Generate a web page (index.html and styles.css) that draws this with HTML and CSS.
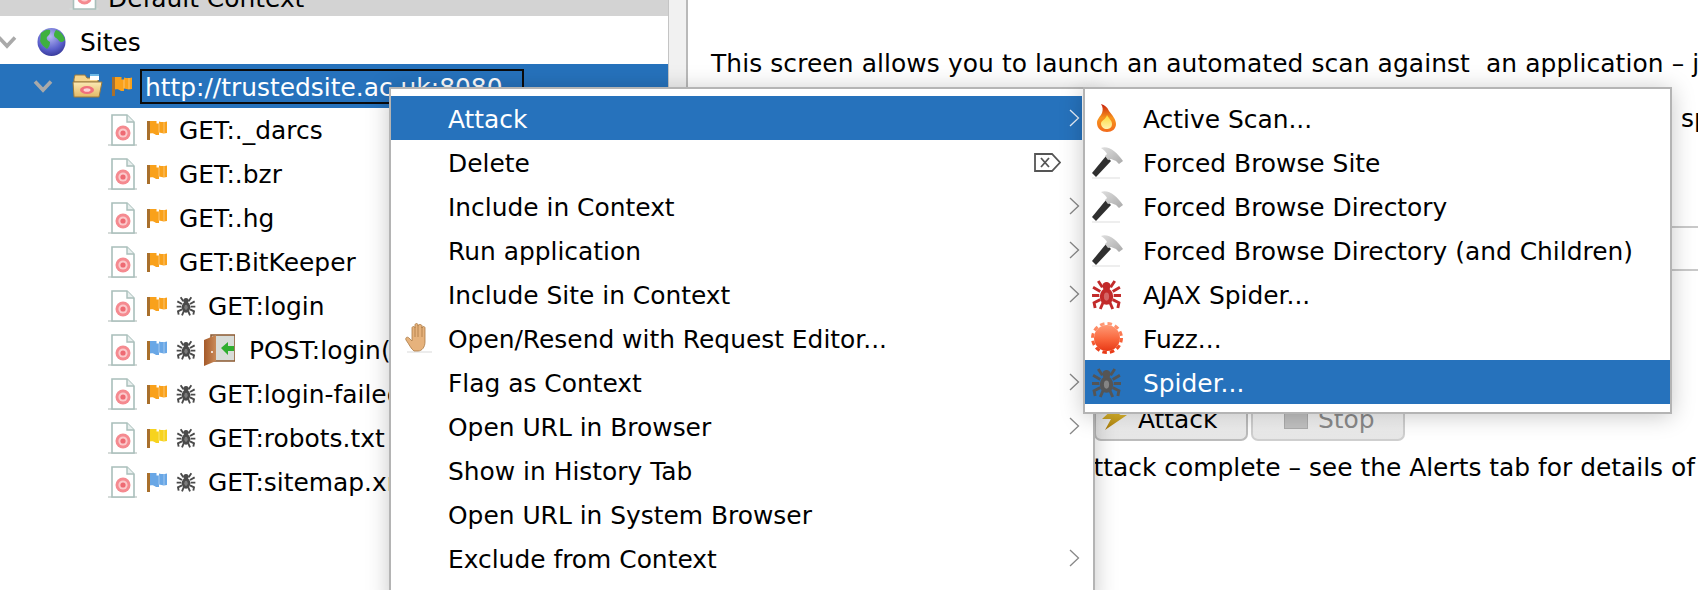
FILE: index.html
```html
<!DOCTYPE html>
<html lang="en">
<head>
<meta charset="utf-8">
<title>OWASP ZAP</title>
<link rel="stylesheet" href="styles.css">
</head>
<body>
<svg class="sprite" aria-hidden="true">
  <defs>
    <linearGradient id="flameG" x1="0" y1="0" x2="0" y2="1"><stop offset="0" stop-color="#c8200c"/><stop offset=".5" stop-color="#f7941e"/><stop offset="1" stop-color="#f26a1b"/></linearGradient>
    <linearGradient id="flameI" x1="0" y1="0" x2="0" y2="1"><stop offset="0" stop-color="#fdd835"/><stop offset="1" stop-color="#fff3b0"/></linearGradient>
    <linearGradient id="burstG" x1="0" y1="0" x2="0" y2="1"><stop offset="0" stop-color="#ff9a76"/><stop offset=".55" stop-color="#f9663c"/><stop offset="1" stop-color="#e83a17"/></linearGradient>
    <linearGradient id="boltG" x1="0" y1="0" x2="0" y2="1"><stop offset="0" stop-color="#f7d33e"/><stop offset="1" stop-color="#a97a08"/></linearGradient>
    <linearGradient id="folderG" x1="0" y1="0" x2="0" y2="1"><stop offset="0" stop-color="#fbe9b4"/><stop offset="1" stop-color="#e3b965"/></linearGradient>
    <linearGradient id="doorG" x1="0" y1="0" x2="1" y2="0"><stop offset="0" stop-color="#a55a2a"/><stop offset="1" stop-color="#c98a58"/></linearGradient>
    <radialGradient id="globeG" cx=".45" cy=".3" r=".8"><stop offset="0" stop-color="#b6b8f2"/><stop offset=".6" stop-color="#5a5fcb"/><stop offset="1" stop-color="#2b2c88"/></radialGradient>
    <linearGradient id="hammerG" x1="0" y1="0" x2="1" y2="1"><stop offset="0" stop-color="#dedede"/><stop offset="1" stop-color="#aaa"/></linearGradient>

    <symbol id="i-doc" viewBox="0 0 29 32">
      <path d="M0 30h29v2H0z" fill="#d5dbd9"/>
      <path d="M4 1h15l7 7v23H4z" fill="#fff" stroke="#a9bfbb" stroke-width="1.6"/>
      <path d="M19 1v7h7" fill="#e8efee" stroke="#a9bfbb" stroke-width="1.4"/>
      <circle cx="15" cy="19" r="7.5" fill="#f58a90"/>
      <circle cx="15" cy="19" r="4.6" fill="#fbc9cb"/>
      <circle cx="15" cy="19" r="2.6" fill="#ee6a73"/>
    </symbol>
    <symbol id="i-flag" viewBox="0 0 20 20">
      <path d="M0 1h3v19H0z" fill="#a9702c"/>
      <path d="M3 1h6.500v2.500H12V1.500c3 .8 5 .6 8 0V13c-3 .7-5 .5-8-.4V15H9c-2-1.800-4-2-6-1.500z" fill="currentColor"/>
      <path d="M12 3.500v9M17 2v11" stroke="#fff" stroke-opacity=".25" stroke-width="1.500"/>
    </symbol>
    <symbol id="i-spider" viewBox="0 0 30 30">
      <g fill="none" stroke="currentColor" stroke-width="2.800">
        <path d="M11 8 7 2M19 8l4-6M9 12 2 8M21 12l7-4M8 16H1M22 16h7M9 20l-6 3 1 5M21 20l6 3-1 5M12 22l-3 7M18 22l3 7"/>
      </g>
      <ellipse cx="15" cy="17" rx="6.500" ry="8" fill="currentColor"/>
      <circle cx="15" cy="7" r="4" fill="currentColor"/>
      <ellipse cx="15" cy="17" rx="2.500" ry="4" fill="#fff" opacity=".28"/>
    </symbol>
    <symbol id="i-chev" viewBox="0 0 20 14">
      <path d="M2 2.500 10 11l8-8.500" fill="none" stroke="#a9a9a9" stroke-width="3.600"/>
    </symbol>
    <symbol id="i-arrow" viewBox="0 0 11 18">
      <path d="M1 1l8.500 8L1 17" fill="none" stroke="currentColor" stroke-width="1.300"/>
    </symbol>
    <symbol id="i-hammer" viewBox="0 0 32 33">
      <path d="M1 31h28v2H1z" fill="#eee"/>
      <path d="M15 10 1 27l4 4 15-16z" fill="#2f2f2f"/>
      <path d="M10 2C17-1 26 6 32 15l-4 3-3-3-5-2-3 1-3-4 2-2c-1-2-3-4-6-6z" fill="url(#hammerG)"/>
    </symbol>
  </defs>
</svg>

<div class="app">
  <section class="tree">
    <div class="row row-context">
      <svg class="ic-doc-ctx"><use href="#i-doc"/></svg>
      <span class="label-ctx">Default Context</span>
    </div>
    <div class="row row-sites">
      <svg class="chev"><use href="#i-chev"/></svg>
      <svg class="globe" viewBox="0 0 29 28">
        <circle cx="14.500" cy="14" r="14" fill="url(#globeG)"/>
        <path d="M4 5c4-3 6-4 9-3 1 3-1 5-3 7-1 2 1 4 3 5 0 3-1 5-3 7-3-2-6-5-7-8 1-2 0-5 1-8zM19 2c4 1 8 5 9 10-2 2-4 3-6 1-1-3-5-3-5-6 0-2 1-4 2-5z" fill="#3fb13f"/>
      </svg>
      <span class="label">Sites</span>
    </div>
    <div class="row row-site">
      <svg class="chev"><use href="#i-chev"/></svg>
      <svg class="folder" viewBox="0 0 31 25">
        <path d="M2 5l1-4h10l2 3h11v4H2z" fill="#f5d58e" stroke="#9b7a3c"/>
        <path d="M18 0h9v6h-9z" fill="#fff"/><path d="M18 0h9v2h-9z" fill="#6db8e6"/>
        <path d="M1 8h29l-3 15H2z" fill="url(#folderG)" stroke="#9b7a3c"/>
        <ellipse cx="15" cy="16" rx="7" ry="4" fill="#f0707c"/><ellipse cx="15" cy="16" rx="3.500" ry="1.800" fill="#fcd4d6"/>
      </svg>
      <svg class="flag flag-orange"><use href="#i-flag"/></svg>
      <span class="url">http://trustedsite.ac.uk:8080</span>
    </div>
    <div class="row row-leaf">
      <svg class="doc"><use href="#i-doc"/></svg><svg class="flag flag-orange"><use href="#i-flag"/></svg>
      <span class="label">GET:._darcs</span>
    </div>
    <div class="row row-leaf">
      <svg class="doc"><use href="#i-doc"/></svg><svg class="flag flag-orange"><use href="#i-flag"/></svg>
      <span class="label">GET:.bzr</span>
    </div>
    <div class="row row-leaf">
      <svg class="doc"><use href="#i-doc"/></svg><svg class="flag flag-orange"><use href="#i-flag"/></svg>
      <span class="label">GET:.hg</span>
    </div>
    <div class="row row-leaf">
      <svg class="doc"><use href="#i-doc"/></svg><svg class="flag flag-orange"><use href="#i-flag"/></svg>
      <span class="label">GET:BitKeeper</span>
    </div>
    <div class="row row-leaf">
      <svg class="doc"><use href="#i-doc"/></svg><svg class="flag flag-orange"><use href="#i-flag"/></svg><svg class="spider"><use href="#i-spider"/></svg>
      <span class="label">GET:login</span>
    </div>
    <div class="row row-leaf">
      <svg class="doc"><use href="#i-doc"/></svg><svg class="flag flag-blue"><use href="#i-flag"/></svg><svg class="spider"><use href="#i-spider"/></svg>
      <svg class="door" viewBox="0 0 31 32">
        <path d="M7 1h24v26H7z" fill="#d8dcd8" stroke="#8c5a30" stroke-width="1.500"/>
        <path d="M0 6l12-5v26L0 32z" fill="url(#doorG)"/>
        <circle cx="8" cy="18" r="1" fill="#fff"/>
        <path d="M17 14l7-6v4h6v5h-6v4z" fill="#2fae2f"/>
      </svg>
      <span class="label label-post">POST:login()</span>
    </div>
    <div class="row row-leaf">
      <svg class="doc"><use href="#i-doc"/></svg><svg class="flag flag-orange"><use href="#i-flag"/></svg><svg class="spider"><use href="#i-spider"/></svg>
      <span class="label">GET:login-failed</span>
    </div>
    <div class="row row-leaf">
      <svg class="doc"><use href="#i-doc"/></svg><svg class="flag flag-yellow"><use href="#i-flag"/></svg><svg class="spider"><use href="#i-spider"/></svg>
      <span class="label">GET:robots.txt</span>
    </div>
    <div class="row row-leaf">
      <svg class="doc"><use href="#i-doc"/></svg><svg class="flag flag-blue"><use href="#i-flag"/></svg><svg class="spider"><use href="#i-spider"/></svg>
      <span class="label">GET:sitemap.xml</span>
    </div>
  </section>

  <div class="splitter"></div>

  <main class="panel">
    <p class="intro intro-1">This screen allows you to launch an automated scan against &nbsp;an application – just enter its URL below and press 'Attack'.</p>
    <p class="intro intro-2">Please be aware that you should only attack applications that you have been specifically been given permission to test.</p>
    <div class="field"></div>
    <div class="actions">
      <button class="btn" type="button">
        <svg class="bolt" viewBox="0 0 28 22"><path d="M12 0h16L17 7h8L3 22l6-11H0z" fill="url(#boltG)"/></svg>Attack
      </button>
      <button class="btn btn-off" type="button"><span class="stop-box"></span>Stop</button>
    </div>
    <p class="status">Attack complete – see the Alerts tab for details of any issues found</p>
  </main>
</div>

<nav class="menu menu-main">
  <div class="mi mi-on"><span class="mi-text">Attack</span><svg class="arrow"><use href="#i-arrow"/></svg></div>
  <div class="mi"><span class="mi-text">Delete</span>
    <svg class="del" viewBox="0 0 27 19"><path d="M1 1h17l8 8.500L18 18H1z" fill="none" stroke="#555" stroke-width="1.800"/><path d="M7 5l8 9M15 5l-8 9" stroke="#555" stroke-width="1.800"/></svg>
  </div>
  <div class="mi"><span class="mi-text">Include in Context</span><svg class="arrow"><use href="#i-arrow"/></svg></div>
  <div class="mi"><span class="mi-text">Run application</span><svg class="arrow"><use href="#i-arrow"/></svg></div>
  <div class="mi"><span class="mi-text">Include Site in Context</span><svg class="arrow"><use href="#i-arrow"/></svg></div>
  <div class="mi"><svg class="hand" viewBox="0 0 27 31">
      <path d="M2 31h25v-2H2z" fill="#ececec"/>
      <path d="M9 29c-3-2-5-7-8-11-1-2 1-4 3-2l3 3V6c0-2 3-2 3 0V3c0-2 3-2 3 0v1c0-2 4-2 4 0v2c0-2 3-2 3 0v14c0 5-3 9-7 9z" fill="#e6b27c" stroke="#a97a45" stroke-width=".8"/>
      <path d="M10 6v9M13 4v11M17 5v10" stroke="#a97a45" stroke-width=".8"/>
    </svg><span class="mi-text">Open/Resend with Request Editor...</span></div>
  <div class="mi"><span class="mi-text">Flag as Context</span><svg class="arrow"><use href="#i-arrow"/></svg></div>
  <div class="mi"><span class="mi-text">Open URL in Browser</span><svg class="arrow"><use href="#i-arrow"/></svg></div>
  <div class="mi"><span class="mi-text">Show in History Tab</span></div>
  <div class="mi"><span class="mi-text">Open URL in System Browser</span></div>
  <div class="mi"><span class="mi-text">Exclude from Context</span><svg class="arrow"><use href="#i-arrow"/></svg></div>
</nav>

<nav class="menu menu-sub">
  <div class="si"><span class="si-icon"><svg class="flame" viewBox="0 0 19 28">
      <path d="M4 0c4 1 6 3 8 7 3 4 7 8 7 13 0 5-4 8-9 8s-10-3-10-9c0-4 3-6 5-10 1-3 1-6-1-9z" fill="url(#flameG)"/>
      <path d="M10 11c1 3 5 5 5 9s-3 5-5.500 5S4 23 4 19.500c0-3 5-4 6-8.500z" fill="url(#flameI)"/>
    </svg></span><span class="si-text">Active Scan...</span></div>
  <div class="si"><span class="si-icon"><svg class="hammer"><use href="#i-hammer"/></svg></span><span class="si-text">Forced Browse Site</span></div>
  <div class="si"><span class="si-icon"><svg class="hammer"><use href="#i-hammer"/></svg></span><span class="si-text">Forced Browse Directory</span></div>
  <div class="si"><span class="si-icon"><svg class="hammer"><use href="#i-hammer"/></svg></span><span class="si-text">Forced Browse Directory (and Children)</span></div>
  <div class="si"><span class="si-icon"><svg class="spider-lg spider-red"><use href="#i-spider"/></svg></span><span class="si-text">AJAX Spider...</span></div>
  <div class="si"><span class="si-icon"><svg class="burst" viewBox="0 0 32 32">
      <circle cx="16" cy="16" r="13" fill="url(#burstG)"/>
      <circle cx="16" cy="16" r="14.500" fill="none" stroke="url(#burstG)" stroke-width="3" stroke-dasharray="4.500 3.100"/>
    </svg></span><span class="si-text">Fuzz...</span></div>
  <div class="si si-on"><span class="si-icon"><svg class="spider-lg spider-dark"><use href="#i-spider"/></svg></span><span class="si-text">Spider...</span></div>
</nav>
</body>
</html>
```
FILE: styles.css
```css
* { box-sizing: border-box; }
html, body { margin: 0; padding: 0; height: 100%; overflow: hidden; background: #fff; }
body { font-family: "DejaVu Sans", "Open Sans", "Liberation Sans", sans-serif; font-size: 24.9px; color: #000; }
.sprite { position: absolute; width: 0; height: 0; }
svg { display: block; flex: none; }

.app { display: flex; height: 590px; width: 1698px; overflow: hidden; }

/* tree */
.tree { width: 669px; flex: none; border-right: 1px solid #c4c4c4; overflow: hidden; }
.row { height: 44px; display: flex; align-items: center; white-space: nowrap; }
.label { line-height: 44px; padding-top: 2px; }
.row-context { margin-top: -28px; margin-bottom: 4px; background: #d3d3d3; padding-left: 68px; }
.ic-doc-ctx { width: 32px; height: 32px; margin-right: 8px; }
.label-ctx { margin-top: 8px; }
.row-sites .chev { width: 20px; height: 14px; margin-left: -3px; margin-right: 20px; }
.globe { width: 29px; height: 28px; margin-right: 14px; }
.row-site { background: #2672bc; color: #fff; }
.row-site .chev { width: 20px; height: 14px; margin-left: 33px; margin-right: 19px; }
.folder { width: 31px; height: 25px; margin-right: 9px; }
.row-site .flag { margin-right: 8px; }
.url { height: 35px; width: 384px; border: 2px solid #0b0b0b; padding-left: 3px; line-height: 33px; overflow: hidden; }
.row-leaf { padding-left: 108px; }
.doc { width: 29px; height: 32px; margin-right: 10px; }
.flag { width: 20px; height: 20px; }
.row-leaf .flag { margin-right: 12px; }
.flag-orange { color: #f9a11b; }
.flag-blue { color: #69a7e6; }
.flag-yellow { color: #f7d31e; }
.spider { width: 20px; height: 20px; color: #4a4a4a; margin-left: -3px; margin-right: 12px; }
.door { width: 31px; height: 32px; margin-left: -4px; margin-right: 14px; }

/* splitter */
.splitter { width: 19px; flex: none; background: #f1f1f1; border-right: 2px solid #b9b9b9; }

/* right panel */
.panel { flex: 1; min-width: 0; overflow: hidden; padding: 42px 0 0 23px; }
.intro { margin: 0; line-height: 44px; white-space: nowrap; }
.intro-1 { letter-spacing: .1px; }
.intro-2 { margin-top: 11px; }
.field { height: 45px; margin: 85px 0 0 200px; border-top: 2px solid #c9c9c9; border-bottom: 2px solid #c9c9c9; }
.actions { display: flex; gap: 3px; margin: 128px 0 0 383px; }
.btn { width: 154px; height: 42px; padding: 0 0 0 6px; display: flex; align-items: center; gap: 8px; font: inherit; color: #000; background: linear-gradient(#fff, #e6e6e6); border: 2px solid #bcbcbc; border-top: 0; border-radius: 0 0 7px 7px; }
.bolt { width: 28px; height: 22px; }
.btn-off { color: #8a8a8a; padding-left: 31px; border-color: #cfcfcf; }
.stop-box { width: 24px; height: 20px; background: #c2c2c2; border: 1px solid #adadad; margin-right: 2px; }
.status { margin: 5px 0 0 366px; line-height: 44px; white-space: nowrap; }

/* context menus */
.menu { position: absolute; background: #fff; border: 2px solid #b4b4b4; box-shadow: 0 2px 22px rgba(0, 0, 0, .22); }
.menu-main { left: 389px; top: 87px; width: 706px; height: 520px; padding-top: 7px; }
.mi { height: 44px; display: flex; align-items: center; padding-left: 57px; position: relative; white-space: nowrap; }
.mi-text, .si-text { padding-top: 2px; }
.mi-on { background: #2672bc; color: #fff; margin-right: 11px; }
.si-on { background: #2672bc; color: #fff; }
.arrow { position: absolute; left: 678px; top: 13px; width: 11px; height: 18px; color: #888; }
.mi-on .arrow { color: #e6eef8; }
.del { position: absolute; left: 643px; top: 13px; width: 27px; height: 19px; }
.hand { position: absolute; left: 14px; top: 6px; width: 27px; height: 31px; }

.menu-sub { left: 1083px; top: 87px; width: 589px; padding: 7px 0 8px; }
.si { height: 44px; display: flex; align-items: center; white-space: nowrap; }
.si-icon { width: 58px; flex: none; display: flex; justify-content: center; padding-right: 15px; }
.flame { width: 19px; height: 28px; }
.hammer { width: 32px; height: 33px; }
.spider-lg { width: 31px; height: 31px; }
.spider-red { color: #c22a2a; }
.spider-dark { color: #555; }
.burst { width: 32px; height: 32px; }
```
